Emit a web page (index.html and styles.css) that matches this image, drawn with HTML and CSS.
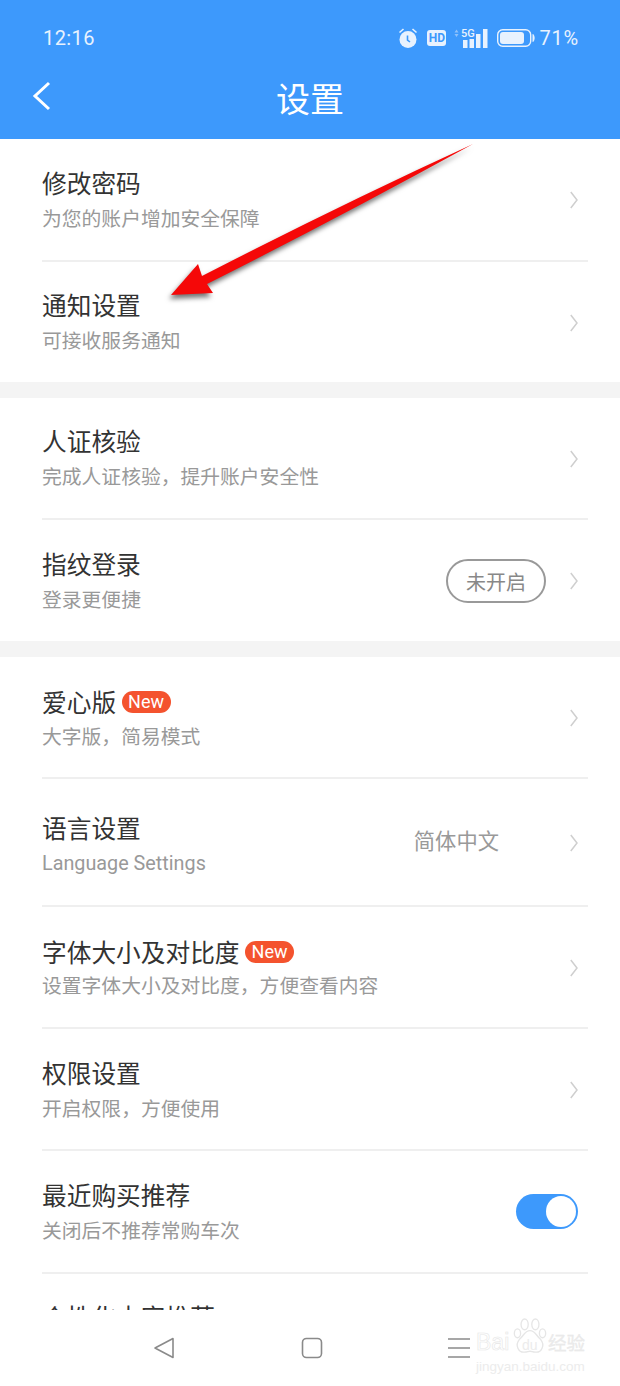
FILE: index.html
```html
<!DOCTYPE html>
<html lang="zh-CN">

<head>
  <meta charset="utf-8">
  <title>设置</title>
  <link rel="stylesheet" href="styles.css">
</head>

<body>
  <svg class="defs" width="0" height="0">
    <symbol id="chev" viewBox="0 0 8 18">
      <path d="M0.800 1 7 9 0.800 17" fill="none" stroke="#cfcfcf" stroke-width="1.500"/>
    </symbol>
  </svg>

  <div class="page">
    <header class="header">
      <div class="status">
        <span class="time">12:16</span>
        <div class="status-icons">
          <svg class="ic-alarm" width="22" height="22" viewBox="0 0 22 22">
            <circle cx="11" cy="12.500" r="8.500" fill="#e8f2fe"/>
            <path d="M2.500 5.500 6.500 2M19.500 5.500 15.500 2" stroke="#e8f2fe" stroke-width="1.600" fill="none"/>
            <path d="M10.500 8.500V13l2.500 2" stroke="#3d99fc" stroke-width="1.600" fill="none"/>
          </svg>
          <span class="hd">HD</span>
          <svg class="ic-signal" width="34" height="20" viewBox="0 0 34 20">
            <path d="M0.500 4.500 2.500 1.500 4.500 4.500ZM0.500 6 2.500 9 4.500 6Z" fill="#8fc2fb"/>
            <text x="7" y="9" class="five-g">5G</text>
            <rect x="9" y="12" width="4.500" height="8" fill="#e8f2fe"/>
            <rect x="15.500" y="11" width="4.500" height="9" fill="#e8f2fe"/>
            <rect x="22" y="6" width="4.500" height="14" fill="#e8f2fe"/>
            <rect x="29" y="1" width="4.500" height="19" fill="#e8f2fe"/>
          </svg>
          <svg class="ic-battery" width="38" height="18" viewBox="0 0 38 18">
            <rect x="0.700" y="0.700" width="33" height="16.600" rx="5" fill="none" stroke="#e8f2fe" stroke-width="1.400"/>
            <rect x="3" y="3" width="24" height="12" rx="3" fill="#e8f2fe"/>
            <path d="M36 5.500c1.500 1 1.500 6 0 7z" fill="#e8f2fe" stroke="#e8f2fe"/>
          </svg>
          <span class="percent">71%</span>
        </div>
      </div>
      <div class="titlebar">
        <svg class="back" width="20" height="30" viewBox="0 0 20 30">
          <path d="M18 2 4 15 18 28" fill="none" stroke="#fff" stroke-width="3"/>
        </svg>
        <h1 class="title">设置</h1>
      </div>
    </header>

    <main class="list">
      <section class="group">
        <div class="row h123">
          <div class="text">
            <div class="name">修改密码</div>
            <div class="desc">为您的账户增加安全保障</div>
          </div>
          <svg class="chevron"><use href="#chev"/></svg>
        </div>
        <div class="row h120 last">
          <div class="text">
            <div class="name">通知设置</div>
            <div class="desc">可接收服务通知</div>
          </div>
          <svg class="chevron"><use href="#chev"/></svg>
        </div>
      </section>

      <section class="group">
        <div class="row h122">
          <div class="text">
            <div class="name">人证核验</div>
            <div class="desc">完成人证核验，提升账户安全性</div>
          </div>
          <svg class="chevron"><use href="#chev"/></svg>
        </div>
        <div class="row h121 last">
          <div class="text">
            <div class="name">指纹登录</div>
            <div class="desc">登录更便捷</div>
          </div>
          <span class="pill">未开启</span>
          <svg class="chevron"><use href="#chev"/></svg>
        </div>
      </section>

      <section class="group">
        <div class="row h122">
          <div class="text flat tight1">
            <div class="name">爱心版<span class="new">New</span></div>
            <div class="desc">大字版，简易模式</div>
          </div>
          <svg class="chevron"><use href="#chev"/></svg>
        </div>
        <div class="row h128">
          <div class="text low">
            <div class="name">语言设置</div>
            <div class="desc latin">Language Settings</div>
          </div>
          <span class="value">简体中文</span>
          <svg class="chevron"><use href="#chev"/></svg>
        </div>
        <div class="row h122">
          <div class="text flat tight2">
            <div class="name">字体大小及对比度<span class="new">New</span></div>
            <div class="desc">设置字体大小及对比度，方便查看内容</div>
          </div>
          <svg class="chevron"><use href="#chev"/></svg>
        </div>
        <div class="row h122">
          <div class="text flat">
            <div class="name">权限设置</div>
            <div class="desc">开启权限，方便使用</div>
          </div>
          <svg class="chevron"><use href="#chev"/></svg>
        </div>
        <div class="row h123">
          <div class="text">
            <div class="name">最近购买推荐</div>
            <div class="desc">关闭后不推荐常购车次</div>
          </div>
          <span class="switch"><span class="knob"></span></span>
        </div>
        <div class="row-peek">
          <div class="name">个性化内容推荐</div>
        </div>
      </section>
    </main>

    <nav class="navbar">
      <svg width="22" height="22" viewBox="0 0 22 22">
        <path d="M20 1.500V20.500L2 11Z" fill="none" stroke="#8a8a8a" stroke-width="1.600" stroke-linejoin="round"/>
      </svg>
      <svg width="22" height="22" viewBox="0 0 22 22">
        <rect x="1.500" y="1.500" width="19" height="19" rx="4" fill="none" stroke="#8a8a8a" stroke-width="1.600"/>
      </svg>
      <svg width="22" height="22" viewBox="0 0 22 22">
        <path d="M0 2H22M0 11H22M0 20H22" stroke="#8a8a8a" stroke-width="1.600"/>
      </svg>
    </nav>

    <!-- annotation drawn on top of the screenshot -->
    <svg class="arrow" width="620" height="400" viewBox="0 0 620 400">
      <path d="M473 144Q340 217 207 284L213 293 171 295 198 264 202 276Q340 205 473 144Z" fill="#f50808"/>
    </svg>

    <div class="watermark">
      <div class="wm-top">
        <span class="wm-bai">Bai</span>
        <span class="wm-paw">
          <svg width="34" height="36" viewBox="0 0 38 40">
            <g fill="#fff" stroke="#e6e6e6" stroke-width="1.500">
              <ellipse cx="5" cy="17" rx="3.500" ry="5"/>
              <ellipse cx="13" cy="7" rx="4" ry="6"/>
              <ellipse cx="25" cy="7" rx="4" ry="6"/>
              <ellipse cx="33" cy="17" rx="3.500" ry="5"/>
              <path d="M19 14c-6 0-7 6-12 10-5 6-1 15 6 14 3 0 4-1 6-1s3 1 6 1c7 1 11-8 6-14-5-4-6-10-12-10Z"/>
            </g>
          </svg>
          <span class="wm-du">du</span>
        </span>
        <span class="wm-cn">经验</span>
      </div>
      <div class="wm-url">jingyan.baidu.com</div>
    </div>
  </div>
</body>

</html>
```

FILE: styles.css
```css
* {
  box-sizing: border-box;
}

body {
  margin: 0;
  background-color: #fff;
  font-family: "Noto Sans CJK SC", "Noto Sans", sans-serif;
}

.defs {
  position: absolute;
}

.page {
  position: relative;
  display: flex;
  flex-direction: column;
  width: 620px;
  height: 1386px;
  overflow: hidden;
}

/* header */
.header {
  flex: none;
  height: 139px;
  padding-top: 19px;
  background-color: #3d99fc;
  color: #fff;
}

.status {
  display: flex;
  justify-content: space-between;
  align-items: center;
  height: 38px;
  padding: 0 41px 0 43px;
  font-family: Roboto, sans-serif;
  font-size: 20px;
  color: #e8f2fe;
}

.status-icons {
  display: flex;
  align-items: center;
}

.ic-alarm {
  margin-right: 8px;
}

.hd {
  width: 19px;
  height: 16px;
  margin-right: 8px;
  border-radius: 3px;
  background-color: #e8f2fe;
  color: #3d99fc;
  font-size: 12px;
  font-weight: 700;
  line-height: 16px;
  text-align: center;
}

.ic-signal {
  margin-right: 9px;
}

.five-g {
  font-family: Roboto, sans-serif;
  font-size: 11px;
  font-weight: 500;
  fill: #e8f2fe;
}

.ic-battery {
  margin-right: 4px;
}

.percent {
  letter-spacing: 0.8px;
}

.time {
  letter-spacing: 0.4px;
}

.titlebar {
  position: relative;
  display: flex;
  justify-content: center;
  align-items: center;
  height: 50px;
  margin-top: 16px;
}

.back {
  position: absolute;
  left: 31px;
  top: 8px;
}

.title {
  margin: 0;
  font-size: 34px;
  font-weight: 400;
  line-height: 50px;
}

/* list */
.list {
  flex: 1;
  overflow: hidden;
  background-color: #f4f4f4;
}

.group {
  margin-bottom: 16px;
  background-color: #fff;
}

.row {
  display: flex;
  align-items: center;
  margin: 0 32px 0 42px;
  border-bottom: 2px solid #efefef;
}

.row.last {
  border-bottom: none;
}

.row-peek {
  margin: 0 32px 0 42px;
  padding-top: 26px;
}

.h120 { height: 120px; }
.h121 { height: 121px; }
.h122 { height: 122px; }
.h123 { height: 123px; }
.h128 { height: 128px; }

.text {
  flex: 1;
  padding-bottom: 2px;
}

.text.flat {
  padding-bottom: 0;
}

.text.low {
  padding-top: 4px;
  padding-bottom: 0;
}

.name {
  display: flex;
  height: 34px;
  color: #333;
  font-size: 24.700px;
  line-height: 32px;
}

.desc {
  margin-top: 4px;
  color: #999;
  font-size: 19.800px;
  line-height: 28px;
}

.tight1 .desc {
  margin-top: 3px;
}

.tight2 .desc {
  margin-top: 2px;
}

.latin {
  margin-top: 5px;
  font-family: Roboto, sans-serif;
}

.new {
  align-self: center;
  width: 49px;
  height: 22px;
  margin-left: 5.500px;
  border-radius: 11px;
  background-color: #f4532e;
  color: #fff;
  font-family: Roboto, sans-serif;
  font-size: 18px;
  line-height: 22px;
  text-align: center;
}

.chevron {
  flex: none;
  width: 8px;
  height: 18px;
  margin-top: 1px;
  margin-right: 10px;
}

.value {
  margin-right: 71px;
  margin-bottom: 6px;
  color: #999;
  font-size: 21.300px;
}

.pill {
  width: 100px;
  height: 44px;
  margin-right: 24px;
  border: 2px solid #999;
  border-radius: 22px;
  color: #888;
  font-size: 20px;
  line-height: 41px;
  text-align: center;
}

.switch {
  display: flex;
  justify-content: flex-end;
  align-items: center;
  width: 62px;
  height: 35px;
  margin-right: 10px;
  padding-right: 2px;
  border-radius: 18px;
  background-color: #3d99fc;
}

.knob {
  width: 30px;
  height: 31px;
  border-radius: 50%;
  background-color: #fff;
}

/* bottom bar */
.navbar {
  flex: none;
  display: flex;
  justify-content: space-between;
  align-items: center;
  height: 76px;
  padding: 0 150px 1px 153px;
  background-color: #fff;
}

/* overlays */
.arrow {
  position: absolute;
  left: 0;
  top: 0;
  filter: drop-shadow(-2px 4px 2.500px rgba(0, 0, 0, 0.55));
}

.watermark {
  position: absolute;
  left: 476px;
  top: 1318px;
  width: 112px;
  color: #ececec;
}

.wm-top {
  display: flex;
  align-items: flex-end;
  height: 36px;
}

.wm-bai {
  width: 37px;
  font-family: "Liberation Sans", sans-serif;
  font-size: 23px;
  line-height: 24px;
  -webkit-text-stroke: 0.600px #e6e6e6;
  color: #fff;
}

.wm-paw {
  position: relative;
  width: 34px;
  height: 36px;
}

.wm-du {
  position: absolute;
  left: 9px;
  bottom: 1px;
  font-family: "Liberation Sans", sans-serif;
  font-size: 14px;
  line-height: 16px;
}

.wm-cn {
  margin-left: 1px;
  font-size: 18.500px;
  line-height: 24px;
  white-space: nowrap;
  -webkit-text-stroke: 0.300px #e6e6e6;
}

.wm-url {
  margin-top: 5px;
  font-family: "Liberation Sans", sans-serif;
  font-size: 13.500px;
  line-height: 15px;
  white-space: nowrap;
}
```
